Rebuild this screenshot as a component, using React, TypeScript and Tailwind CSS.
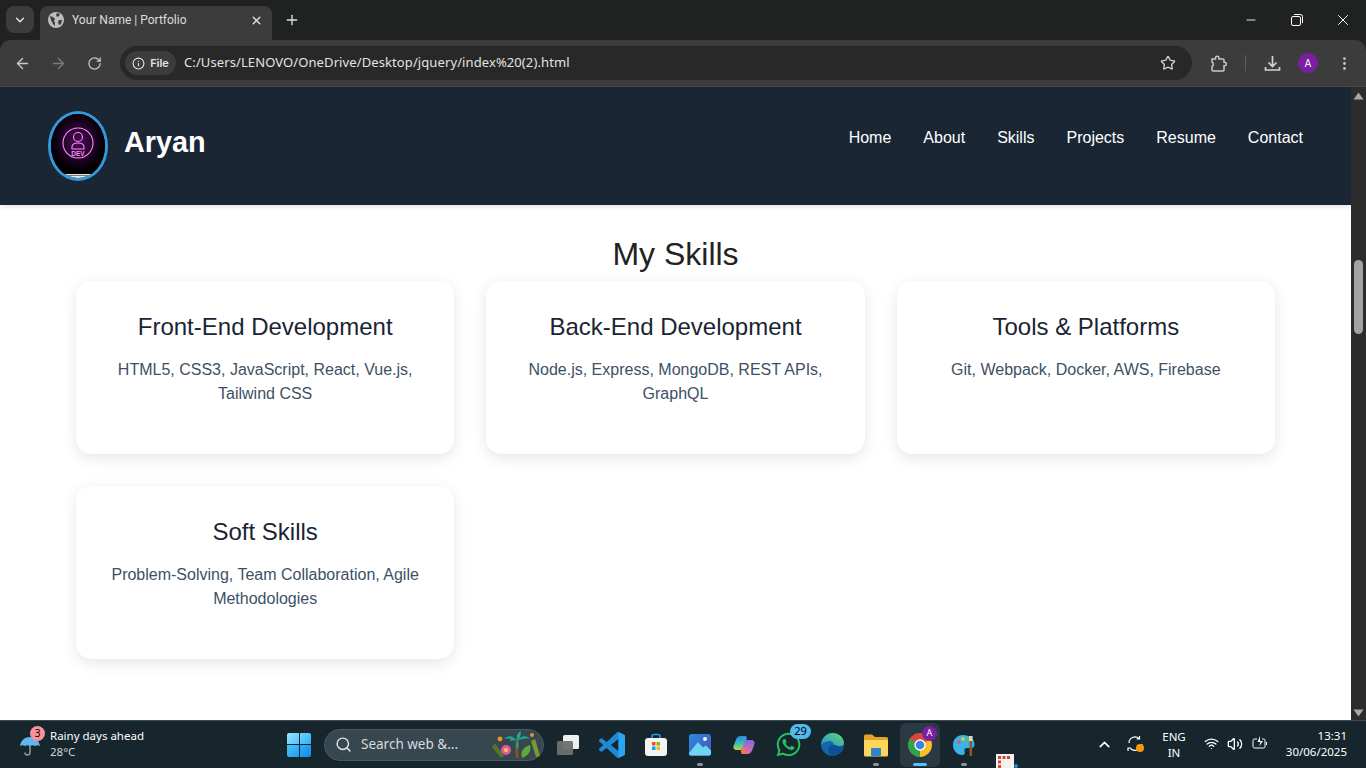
import React from 'react';
import {
  ArrowLeft,
  ArrowRight,
  ChevronDown,
  ChevronUp,
  Info,
  MoreVertical,
  Plus,
  RotateCw,
  Search,
  Star,
  Volume2,
  Wifi,
  X,
  Minus,
} from 'lucide-react';
import { FaWhatsapp } from 'react-icons/fa';

const NAV_LINKS = ['Home', 'About', 'Skills', 'Projects', 'Resume', 'Contact'];

const SKILLS = [
  { title: 'Front-End Development', text: 'HTML5, CSS3, JavaScript, React, Vue.js, Tailwind CSS' },
  { title: 'Back-End Development', text: 'Node.js, Express, MongoDB, REST APIs, GraphQL' },
  { title: 'Tools & Platforms', text: 'Git, Webpack, Docker, AWS, Firebase' },
  { title: 'Soft Skills', text: 'Problem-Solving, Team Collaboration, Agile Methodologies' },
];

const BrowserChrome = () => (
  <div className="h-[87px] shrink-0 bg-[#202221] font-['Inter',sans-serif] text-[#e3e3e3]">
    <div className="flex h-10 items-end pl-[6px]">
      <div className="mb-[7px] flex h-[27px] w-[28px] items-center justify-center rounded-lg bg-[#3c3c3c]">
        <ChevronDown size={14} strokeWidth={2.5} />
      </div>
      <div className="ml-[6px] flex h-[34px] w-[232px] items-center rounded-t-lg bg-[#3c3c3c] pb-[6px] pl-[8px] pr-[9px]">
        <svg width="16" height="16" viewBox="0 0 16 16">
          <circle cx="8" cy="8" r="8" fill="#bdbdbd" />
          <path d="M2 4l3 1 2 2-1 2 1 2v3l-2-2-2-4zM9 1l3 1-1 2-2 1-1-2zM11 8l3 0-1 4-2 1-1-3z" fill="#3c3c3c" />
        </svg>
        <span className="ml-[8px] flex-1 font-['Roboto',sans-serif] text-[12px] text-[#dcdcdc]">Your Name | Portfolio</span>
        <X size={13} strokeWidth={2.5} />
      </div>
      <div className="mb-[8px] ml-[8px] flex h-6 w-6 items-center justify-center">
        <Plus size={16} />
      </div>
      <div className="mb-[11px] ml-auto flex items-center">
        <div className="flex w-[47px] justify-center"><Minus size={14} strokeWidth={1.5} className="text-white" /></div>
        <div className="flex w-[46px] justify-center">
          <svg width="12" height="12" viewBox="0 0 12 12" fill="none" stroke="#ffffff" strokeWidth="1">
            <rect x="0.5" y="2.5" width="9" height="9" rx="1.5" />
            <path d="M3 0.5h6.5a2 2 0 0 1 2 2V9" />
          </svg>
        </div>
        <div className="flex w-[46px] justify-center"><X size={18} strokeWidth={1.3} className="text-white" /></div>
      </div>
    </div>
    <div className="flex h-[47px] items-center rounded-t-[10px] border-b border-[#4a4a4a] bg-[#3c3c3c] pl-[14px] pr-[13px]">
      <ArrowLeft size={17} className="text-[#c7c7c7]" />
      <ArrowRight size={17} className="ml-[19px] text-[#7b7b7b]" />
      <RotateCw size={15} className="ml-[20px] text-[#c7c7c7]" />
      <div className="ml-[18px] flex h-[34px] flex-1 items-center rounded-full bg-[#282828] pl-[5px] pr-[16px]">
        <div className="flex h-6 w-[51px] items-center justify-center gap-[5px] rounded-full bg-[#3c3c3c]">
          <Info size={13} />
          <span className="text-[11px] font-semibold">File</span>
        </div>
        <span className="ml-[8px] flex-1 font-['Noto_Sans',sans-serif] text-[13px] tracking-[0.1px] text-[#e3e3e3]">
          C:/Users/LENOVO/OneDrive/Desktop/jquery/index%20(2).html
        </span>
        <Star size={16} className="text-[#d0d0d0]" />
      </div>
      <svg width="17" height="17" viewBox="0 0 17 17" fill="none" stroke="#c7c7c7" strokeWidth="1.5" className="ml-[18px]">
        <path d="M2 4h3.500V3a1.700 1.700 0 0 1 3.400 0v1H13a1 1 0 0 1 1 1v2.300h.6a1.700 1.700 0 0 1 0 3.400H14V15a1 1 0 0 1-1 1H3a1 1 0 0 1-1-1v-3.500a2.500 2.500 0 0 0 0-4.500z" />
      </svg>
      <div className="ml-[18px] h-4 w-px bg-[#5f5f5f]" />
      <svg width="17" height="17" viewBox="0 0 17 17" fill="none" stroke="#d4d4d4" strokeWidth="1.7" className="ml-[18px]">
        <path d="M8.500 1v10M4.500 7.500l4 4 4-4M1.500 12v3h14v-3" />
      </svg>
      <div className="ml-[17px] flex h-5 w-5 items-center justify-center rounded-full bg-[#7b1fa2] text-[10px] text-white">A</div>
      <MoreVertical size={17} className="ml-[18px] text-[#c7c7c7]" />
    </div>
  </div>
);

const Logo = () => (
  <div className="h-[70px] w-[60px] shrink-0 overflow-hidden rounded-[50%] border-[3px] border-[#3498db] bg-black">
    <svg width="54" height="64" viewBox="0 0 54 64">
      <defs>
        <radialGradient id="glow" cx="50%" cy="46%" r="50%">
          <stop offset="0%" stopColor="#4a0d50" />
          <stop offset="65%" stopColor="#1c0322" />
          <stop offset="100%" stopColor="#000" />
        </radialGradient>
      </defs>
      <rect width="54" height="60" fill="url(#glow)" />
      <rect y="60" width="54" height="4" fill="#e8e8e8" />
      <rect x="16" y="61" width="22" height="1" fill="#777777" />
      <g fill="none" stroke="#ff8cff" strokeWidth="1.1">
        <circle cx="27" cy="29" r="15" />
        <circle cx="27" cy="23" r="4.500" />
        <path d="M21 35v-2c0-2.500 2.500-4 6-4s6 1.500 6 4v2z" />
      </g>
      <text x="27" y="41.500" textAnchor="middle" fontSize="6.500" fontWeight="700" fill="#ff8cff" fontFamily="Liberation Sans, sans-serif">DEV</text>
    </svg>
  </div>
);

const SiteHeader = () => (
  <header className="relative z-10 flex h-[118px] items-center justify-between bg-[#1b2635] px-[48px] shadow-[0_2px_5px_rgba(0,0,0,0.1)]">
    <div className="flex items-center gap-4">
      <Logo />
      <h1 className="mb-[6px] text-[28.8px] font-bold text-white">Aryan</h1>
    </div>
    <nav className="mb-[16px] flex gap-8 text-base text-white">
      {NAV_LINKS.map((link) => (
        <a key={link}>{link}</a>
      ))}
    </nav>
  </header>
);

const SkillCard = ({ title, text }: { title: string; text: string }) => (
  <div className="h-[173px] rounded-[15px] bg-white p-8 text-center shadow-[0_4px_15px_rgba(0,0,0,0.1)]">
    <h3 className="mb-[17px] text-2xl leading-7 text-[#1a2533]">{title}</h3>
    <p className="text-base leading-6 text-[#3d5166]">{text}</p>
  </div>
);

const Scrollbar = () => (
  <div className="flex w-[15px] shrink-0 flex-col items-center bg-[#2c2c2c]">
    <svg width="11" height="8" viewBox="0 0 11 8" className="mt-[5px]">
      <path d="M5.500 0.500L10.500 7.500H0.500z" fill="#a8a8a8" />
    </svg>
    <div className="mt-[160px] h-[74px] w-[9px] rounded-full bg-[#a3a3a3]" />
    <svg width="11" height="8" viewBox="0 0 11 8" className="mt-auto mb-[3px]">
      <path d="M5.500 7.500L10.500 0.500H0.500z" fill="#a8a8a8" />
    </svg>
  </div>
);

const WeatherIcon = () => (
  <svg width="22" height="24" viewBox="0 0 22 24">
    <path d="M11 7v12.500a2.500 2.500 0 0 1-5 0" fill="none" stroke="#8f9aa3" strokeWidth="1.500" />
    <path d="M1 13C2 7 6 4 11 4s9 3 10 9c-1.500-1-3.500-1-5 0-1.500-1-3.500-1-5 0-1.500-1-3.500-1-5 0-1.500-1-3.500-1-5 0z" fill="#62b6ee" />
  </svg>
);

const WinLogo = () => (
  <div className="grid h-6 w-6 grid-cols-2 gap-px">
    <div className="rounded-tl-[2px] bg-gradient-to-br from-[#9fe4ff] to-[#4cc2fb]" />
    <div className="rounded-tr-[2px] bg-gradient-to-br from-[#6fd4ff] to-[#2fb0f5]" />
    <div className="rounded-bl-[2px] bg-gradient-to-br from-[#4cc2fb] to-[#1a9ef0]" />
    <div className="rounded-br-[2px] bg-gradient-to-br from-[#2fb0f5] to-[#0f8ae8]" />
  </div>
);

const PalmIcon = () => (
  <svg width="52" height="30" viewBox="0 0 52 30">
    <path d="M25 11c-1 6-1 11 0 17h3c-1-6-1-11 0-17z" fill="#7a5a2a" />
    <path d="M26 11C22 5 17 5 13 9c5-1 9 0 13 2zM26 11c4-6 10-6 13-2-5-1-9 0-13 2zM26 11c-1-5 0-8 4-10 0 4-1 7-4 10zM26 11c-3-3-6-4-7 0 2-1 4-1 7 0zM26 11c2 3 2 6 0 8-1-3-1-5 0-8z" fill="#1fa892" />
    <path d="M31 28c-2-6 1-11 8-13 2 6-2 11-8 13z" fill="#62a63c" />
    <path d="M44 9l5 17-4 1-5-16z" fill="#7c9a30" />
    <path d="M4 13l9 13-3 2-9-11z" fill="#55762c" />
    <circle cx="15" cy="20" r="5" fill="#e5579c" />
    <circle cx="15" cy="20" r="2" fill="#f6d04d" />
    <circle cx="9" cy="9" r="2.400" fill="#e8912d" />
    <circle cx="41" cy="5" r="2" fill="#e8912d" />
  </svg>
);

const TaskIcon = ({ children, running, active }: { children: React.ReactNode; running?: boolean; active?: boolean }) => (
  <div className={`relative flex h-[44px] w-[40px] items-center justify-center rounded-md ${active ? 'bg-[#2b3a42]' : ''}`}>
    {children}
    {running && (
      <div className={`absolute bottom-[1px] h-[3px] rounded-full ${active ? 'w-[14px] bg-[#4fc3f7]' : 'w-[6px] bg-[#8a9399]'}`} />
    )}
  </div>
);

const Taskbar = () => (
  <div className="relative flex h-12 shrink-0 items-center border-t border-[#3a4a50] bg-[#17262d] font-['Noto_Sans',sans-serif] text-white">
    {/* weather */}
    <div className="relative ml-[19px] flex w-[268px] items-center">
      <WeatherIcon />
      <div className="absolute left-[11px] top-[-3px] flex h-[15px] w-[15px] items-center justify-center rounded-full bg-[#f7919c] text-[10px] text-black">3</div>
      <div className="ml-[9px] -translate-y-px text-[11.5px] leading-[16px]">
        <div>Rainy days ahead</div>
        <div className="text-[#d0d6d8]">28°C</div>
      </div>
    </div>
    <WinLogo />
    <div className="ml-[13px] flex h-8 w-[220px] items-center rounded-full border border-[#4a5a60] bg-[#36474f] pl-[10px]">
      <Search size={17} className="text-[#e6e6e6]" />
      <span className="ml-[9px] flex-1 text-[13.5px] text-[#d8dcde]">Search web &amp;...</span>
      <PalmIcon />
    </div>
    <div className="ml-[4px] flex items-center gap-[4px]">
      <TaskIcon>
        <svg width="26" height="24" viewBox="0 0 26 24">
          <rect x="8" y="2" width="16" height="14" rx="1.500" fill="#efefef" />
          <rect x="2" y="8" width="16" height="14" rx="1.500" fill="#6f6f6f" fillOpacity="0.95" />
        </svg>
      </TaskIcon>
      <TaskIcon>
        <svg width="26" height="26" viewBox="0 0 24 24">
          <path fill="#1f8ad2" d="M23.15 2.587L18.21.21a1.494 1.494 0 0 0-1.705.29l-9.46 8.63-4.12-3.128a.999.999 0 0 0-1.276.057L.327 7.261A1 1 0 0 0 .326 8.74L3.899 12 .326 15.26a1 1 0 0 0 .001 1.479L1.65 17.94a.999.999 0 0 0 1.276.057l4.12-3.128 9.46 8.63a1.492 1.492 0 0 0 1.704.29l4.942-2.377A1.500 1.500 0 0 0 24 20.06V3.939a1.500 1.500 0 0 0-.85-1.352zm-5.146 14.861L10.826 12l7.178-5.448v10.896z" />
          <path fill="#2aa6f0" d="M18.004.1l5.146 2.487A1.500 1.500 0 0 1 24 3.939V20.060a1.500 1.500 0 0 1-.85 1.352L18.004 23.900V17.448 6.552z" />
        </svg>
      </TaskIcon>
      <TaskIcon>
        <svg width="24" height="24" viewBox="0 0 24 24">
          <path d="M8 6V3.500A2 2 0 0 1 10 1.500h4a2 2 0 0 1 2 2V6" fill="none" stroke="#1fa0d8" strokeWidth="1.600" />
          <rect x="1" y="5" width="22" height="18" rx="3" fill="#f4f4f4" />
          <rect x="8" y="9" width="3.500" height="3.500" fill="#f25022" />
          <rect x="12.500" y="9" width="3.500" height="3.500" fill="#7fba00" />
          <rect x="8" y="13.500" width="3.500" height="3.500" fill="#00a4ef" />
          <rect x="12.500" y="13.500" width="3.500" height="3.500" fill="#ffb900" />
        </svg>
      </TaskIcon>
      <TaskIcon running>
        <svg width="24" height="24" viewBox="0 0 24 24">
          <defs>
            <linearGradient id="photoBg" x1="0" y1="0" x2="1" y2="1">
              <stop offset="0%" stopColor="#2b8be0" />
              <stop offset="100%" stopColor="#4a4fb5" />
            </linearGradient>
          </defs>
          <rect x="1" y="1" width="22" height="22" rx="2.500" fill="url(#photoBg)" />
          <path d="M1 20l9-11 5 5.500 3-2 5 5v3a2 2 0 0 1-2 2H3a2 2 0 0 1-2-2.500z" fill="#6fd3f2" />
          <circle cx="17" cy="6" r="2" fill="#e8f7ff" />
        </svg>
      </TaskIcon>
      <TaskIcon>
        <svg width="24" height="24" viewBox="0 0 24 24">
          <defs>
            <linearGradient id="copL" x1="0" y1="0" x2="0" y2="1">
              <stop offset="0%" stopColor="#2d8de8" />
              <stop offset="55%" stopColor="#3cc0b0" />
              <stop offset="100%" stopColor="#b7d84a" />
            </linearGradient>
            <linearGradient id="copR" x1="0" y1="0" x2="0" y2="1">
              <stop offset="0%" stopColor="#7a6ae6" />
              <stop offset="100%" stopColor="#ee6aa0" />
            </linearGradient>
          </defs>
          <path d="M9 3h4c2 0 2 2 1.500 3.500L11 17H5c-3 0-4-2-3.500-4L4 6.500C5 4 6.500 3 9 3z" fill="url(#copL)" />
          <path d="M15 21h-4c-2 0-2-2-1.500-3.500L13 7h6c3 0 4 2 3.500 4L20 17.500C19 20 17.500 21 15 21z" fill="url(#copR)" />
          <path d="M9 15h5l-1.500 6H11c-2 0-2.500-2-2-4z" fill="#f0784a" />
        </svg>
      </TaskIcon>
      <TaskIcon>
        <FaWhatsapp size={27} className="text-[#25c15f]" />
        <div className="absolute right-[-3px] top-[1px] flex h-[15px] w-[21px] items-center justify-center rounded-full bg-[#53b7f0] text-[11px] text-black">29</div>
      </TaskIcon>
      <TaskIcon>
        <svg width="25" height="25" viewBox="0 0 24 24">
          <defs>
            <linearGradient id="edgeTop" x1="0" y1="1" x2="1" y2="0">
              <stop offset="0%" stopColor="#1c8fd8" />
              <stop offset="100%" stopColor="#5fd86e" />
            </linearGradient>
          </defs>
          <circle cx="12" cy="12" r="11" fill="#1565b0" />
          <path d="M1 12C2 5 7 1 12 1c7 0 11 5 11 10 0 3-3 4-6 4-3 0-4-1-4-3 0-3-3-4-6-3-3 .5-5 2-6 3z" fill="url(#edgeTop)" />
          <path d="M8 17c0-4 4-6 8-4 2 1 5 1 7-1-1 6-6 11-11 11-2 0-4-3-4-6z" fill="#0f4f94" />
        </svg>
      </TaskIcon>
      <TaskIcon running>
        <svg width="26" height="24" viewBox="0 0 26 24">
          <path d="M1 3a1.500 1.500 0 0 1 1.500-1.500H9L12 4h11.500A1.500 1.500 0 0 1 25 5.500V8H1z" fill="#e0a526" />
          <path d="M1 7h24v15a1.500 1.500 0 0 1-1.500 1.500h-21A1.500 1.500 0 0 1 1 22z" fill="#ffd65c" />
          <rect x="8" y="15" width="10" height="8" rx="1" fill="#2e86c8" />
        </svg>
      </TaskIcon>
      <TaskIcon running active>
        <svg width="26" height="26" viewBox="0 0 24 24">
          <circle cx="12" cy="12" r="11" fill="#d9463c" />
          <path d="M12 12L21.500 6.500A11 11 0 0 1 12 23z" fill="#f6c028" />
          <path d="M12 12L12 23A11 11 0 0 1 2.500 6.500z" fill="#2ea44f" />
          <circle cx="12" cy="12" r="5.200" fill="#fff" />
          <circle cx="12" cy="12" r="4" fill="#3b82e6" />
        </svg>
        <div className="absolute right-[3px] top-[3px] flex h-[15px] w-[15px] items-center justify-center rounded-full bg-[#7b1fa2] text-[9px] text-white">A</div>
      </TaskIcon>
      <TaskIcon running>
        <svg width="24" height="24" viewBox="0 0 24 24">
          <path d="M11 2C5 2 1 6.500 1 12s4 10 9 10c3 0 3-2 2.500-4-.5-2 .5-3 3-3h4c2 0 3-1.500 3-4C22.500 6 17 2 11 2z" fill="#3bb3e8" />
          <circle cx="7" cy="9" r="1.800" fill="#e85b4c" />
          <circle cx="11" cy="6" r="1.800" fill="#f5c53a" />
          <circle cx="15" cy="7" r="1.800" fill="#5fbf4f" />
          <rect x="17.500" y="8" width="2.600" height="15" fill="#8a5a2b" />
          <rect x="17" y="3" width="3.600" height="5" fill="#e8d9b0" />
        </svg>
      </TaskIcon>
    </div>
    {/* small app badge cut off by the bottom of the screen */}
    <svg width="22" height="14" viewBox="0 0 22 14" className="absolute left-[996px] top-[33px]">
      <rect width="18" height="14" fill="#f2f2f2" />
      <path d="M2 2h3v3H2zM6.500 2h3v3h-3zM11 2h3v3h-3zM2 6.500h3v3H2zM2 11h3v3H2z" fill="#d8452e" />
      <circle cx="20" cy="12" r="2" fill="#2e86c8" />
    </svg>
    {/* tray */}
    <ChevronUp size={17} strokeWidth={2.2} className="absolute left-[1096px] top-[15px]" />
    <div className="absolute left-[1127px] top-[14px]">
      <svg width="17" height="17" viewBox="0 0 17 17" fill="none" stroke="#ffffff" strokeWidth="1.200">
        <path d="M2 8a6 6 0 0 1 10-4.500M12.500 1v3h-3M15 9a6 6 0 0 1-2 4M10 15a6 6 0 0 1-6.500-1.500M1 16v-3h3" />
      </svg>
      <div className="absolute left-[9px] top-[9px] h-2 w-2 rounded-full bg-[#f59a0c]" />
    </div>
    <div className="absolute left-[1158px] top-[8px] w-8 text-center text-[11.5px] leading-[16px]">
      <div>ENG</div>
      <div>IN</div>
    </div>
    <Wifi size={15} className="absolute left-[1204px] top-[15px]" />
    <Volume2 size={16} className="absolute left-[1227px] top-[15px]" />
    <svg width="16" height="15" viewBox="0 0 16 15" className="absolute left-[1252px] top-[14px]" fill="none" stroke="#fff">
      <path d="M5 4H2.500A1.500 1.500 0 0 0 1 5.500v6A1.500 1.500 0 0 0 2.500 13h9a1.500 1.500 0 0 0 1.500-1.500v-6A1.500 1.500 0 0 0 11.500 4H10M14.500 7v3" />
      <path d="M8 1L5.500 7h3l-1.500 4.500L11 6H8z" fill="#fff" stroke="none" />
    </svg>
    <div className="absolute right-[19px] top-[7px] text-right text-[11.5px] leading-[16px]">
      <div>13:31</div>
      <div>30/06/2025</div>
    </div>
  </div>
);

export default function App() {
  return (
    <div className="flex h-screen flex-col overflow-hidden bg-white font-['Liberation_Sans',Arial,sans-serif]">
      <BrowserChrome />
      <div className="flex min-h-0 flex-1">
        <main className="min-w-0 flex-1 overflow-hidden">
          <SiteHeader />
          <section className="px-[76px] pt-[30px]">
            <h2 className="mb-[8px] text-center text-[32px] leading-[38px] text-[#222222]">My Skills</h2>
            <div className="grid grid-cols-3 gap-8">
              {SKILLS.map((skill) => (
                <SkillCard key={skill.title} title={skill.title} text={skill.text} />
              ))}
            </div>
          </section>
        </main>
        <Scrollbar />
      </div>
      <Taskbar />
    </div>
  );
}
